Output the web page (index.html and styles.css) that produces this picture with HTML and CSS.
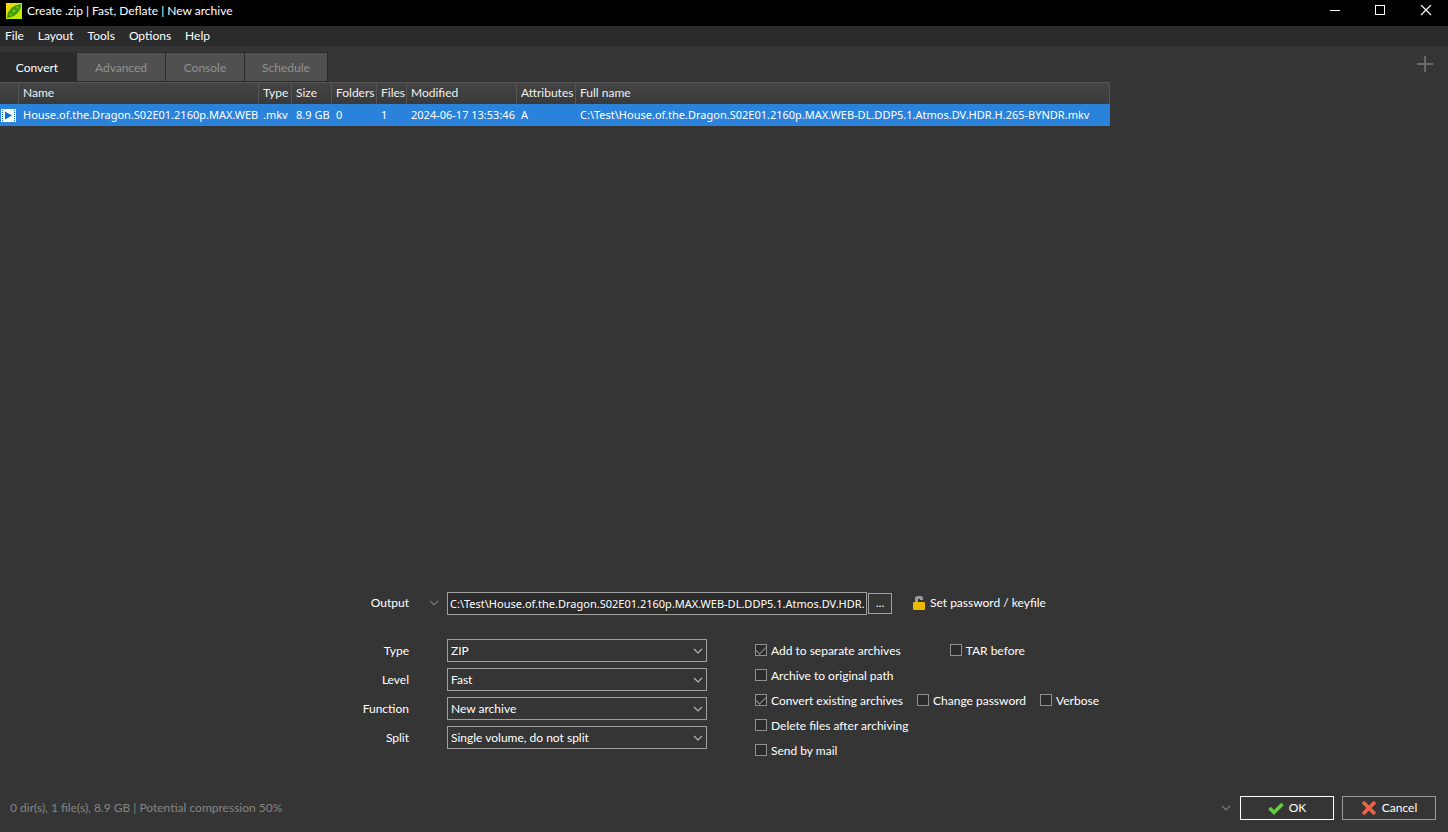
FILE: index.html
```html
<!DOCTYPE html>
<html lang="en">
<head>
<meta charset="utf-8">
<title>Create .zip | Fast, Deflate | New archive</title>
<link rel="stylesheet" href="styles.css">
</head>
<body>
<div class="window">
  <header class="titlebar">
    <svg class="app-icon" width="16" height="16" viewBox="0 0 16 16" aria-hidden="true">
      <defs><linearGradient id="leaf" x1="0" y1="0" x2="1" y2="1"><stop offset="0" stop-color="#f8d800"/><stop offset="1" stop-color="#b0f000"/></linearGradient></defs>
      <rect width="16" height="16" fill="url(#leaf)"/>
      <path d="M1 15C1 9 5 2 15 1C15 7 11 14 1 15Z" fill="#3f9d0c"/>
      <g fill="#8ccc0c" stroke="#2f8008" stroke-width=".6"><circle cx="4.600" cy="11.400" r="1.500"/><circle cx="8" cy="8" r="1.900"/><circle cx="11.400" cy="4.600" r="1.500"/></g>
    </svg>
    <h1 class="title">Create .zip | Fast, Deflate | New archive</h1>
    <div class="window-buttons">
      <button class="window-button" aria-label="Minimize"><svg width="12" height="12" viewBox="0 0 12 12"><path d="M0 5.500H10" stroke="#fff"/></svg></button>
      <button class="window-button" aria-label="Maximize"><svg width="12" height="12" viewBox="0 0 12 12"><rect x=".5" y=".5" width="9" height="9" fill="none" stroke="#fff"/></svg></button>
      <button class="window-button" aria-label="Close"><svg width="12" height="12" viewBox="0 0 12 12"><path d="M1 0L11 10M11 0L1 10" stroke="#fff" stroke-width="1.200"/></svg></button>
    </div>
  </header>

  <nav class="menubar">
    <button class="menu">File</button>
    <button class="menu">Layout</button>
    <button class="menu">Tools</button>
    <button class="menu">Options</button>
    <button class="menu">Help</button>
  </nav>

  <div class="tabbar">
    <div class="tabs" role="tablist">
      <button class="tab tab-convert tab-active" role="tab" aria-selected="true">Convert</button>
      <button class="tab tab-advanced" role="tab">Advanced</button>
      <button class="tab tab-console" role="tab">Console</button>
      <button class="tab tab-schedule" role="tab">Schedule</button>
    </div>
    <button class="add" aria-label="Add"><svg width="16" height="16" viewBox="0 0 16 16"><path d="M8 0V16M0 8H16" stroke="#696969" stroke-width="2"/></svg></button>
  </div>

  <main class="content">
    <div class="file-list">
      <table class="files">
        <colgroup><col class="c-icon"><col class="c-name"><col class="c-type"><col class="c-size"><col class="c-folders"><col class="c-files"><col class="c-modified"><col class="c-attributes"><col class="c-full"></colgroup>
        <thead>
          <tr><th></th><th>Name</th><th>Type</th><th>Size</th><th>Folders</th><th>Files</th><th>Modified</th><th>Attributes</th><th>Full name</th></tr>
        </thead>
        <tbody>
          <tr>
            <td class="icon-cell"><svg width="16" height="16" viewBox="0 0 16 16" aria-hidden="true"><rect x="1" y="2" width="15" height="13" fill="#fff"/><path d="M2.500 3V15M14.500 3V15" stroke="#1c74d0" stroke-dasharray="1 1"/><path d="M5 4.500L12 8.500L5 12.500Z" fill="#0f6fcd"/></svg></td>
            <td>House.of.the.Dragon.S02E01.2160p.MAX.WEB-DL.DDP5.1.Atmos.DV.HDR.H.265-BYNDR.mkv</td>
            <td>.mkv</td><td>8.9 GB</td><td>0</td><td>1</td><td>2024-06-17 13:53:46</td><td>A</td>
            <td>C:\Test\House.of.the.Dragon.S02E01.2160p.MAX.WEB-DL.DDP5.1.Atmos.DV.HDR.H.265-BYNDR.mkv</td>
          </tr>
        </tbody>
      </table>
    </div>

    <form class="options">
      <div class="output-row">
        <label class="label" for="output">Output</label>
        <button type="button" class="history" aria-label="Output history"><svg width="10" height="6" viewBox="0 0 10 6"><path d="M1 1L5 5L9 1" fill="none" stroke="#7a7a7a" stroke-width="1.200"/></svg></button>
        <input class="output" id="output" type="text" value="C:\Test\House.of.the.Dragon.S02E01.2160p.MAX.WEB-DL.DDP5.1.Atmos.DV.HDR.H.265-BYNDR.zip">
        <button type="button" class="browse">...</button>
        <button type="button" class="password">
          <svg width="14" height="16" viewBox="0 0 14 16" aria-hidden="true"><path d="M4.500 8V3.500Q4.500 2.500 5.500 2.500H8.500Q9.500 2.500 9.500 3.500V5" fill="none" stroke="#9c9c9c" stroke-width="3"/><rect x="1" y="7" width="12" height="8" rx="1" fill="#ecb800"/></svg>
          Set password / keyfile
        </button>
      </div>
      <div class="settings">
        <div class="selects">
          <label class="label" for="type">Type</label>
          <div class="select-box"><select id="type"><option>ZIP</option></select><svg class="chevron" width="10" height="6" viewBox="0 0 10 6"><path d="M1 1L5 5L9 1" fill="none" stroke="#b4b4b4" stroke-width="1.200"/></svg></div>
          <label class="label" for="level">Level</label>
          <div class="select-box"><select id="level"><option>Fast</option></select><svg class="chevron" width="10" height="6" viewBox="0 0 10 6"><path d="M1 1L5 5L9 1" fill="none" stroke="#b4b4b4" stroke-width="1.200"/></svg></div>
          <label class="label" for="function">Function</label>
          <div class="select-box"><select id="function"><option>New archive</option></select><svg class="chevron" width="10" height="6" viewBox="0 0 10 6"><path d="M1 1L5 5L9 1" fill="none" stroke="#b4b4b4" stroke-width="1.200"/></svg></div>
          <label class="label" for="split">Split</label>
          <div class="select-box"><select id="split"><option>Single volume, do not split</option></select><svg class="chevron" width="10" height="6" viewBox="0 0 10 6"><path d="M1 1L5 5L9 1" fill="none" stroke="#b4b4b4" stroke-width="1.200"/></svg></div>
        </div>
        <div class="checks">
          <div class="check-row check-row-tar"><label class="check"><input type="checkbox" checked>Add to separate archives</label><label class="check"><input type="checkbox">TAR before</label></div>
          <div class="check-row"><label class="check"><input type="checkbox">Archive to original path</label></div>
          <div class="check-row"><label class="check"><input type="checkbox" checked>Convert existing archives</label><label class="check"><input type="checkbox">Change password</label><label class="check"><input type="checkbox">Verbose</label></div>
          <div class="check-row"><label class="check"><input type="checkbox">Delete files after archiving</label></div>
          <div class="check-row"><label class="check"><input type="checkbox">Send by mail</label></div>
        </div>
      </div>
    </form>
  </main>

  <footer class="footer">
    <p class="status">0 dir(s), 1 file(s), 8.9 GB | Potential compression 50%</p>
    <button class="history" aria-label="More actions"><svg width="10" height="6" viewBox="0 0 10 6"><path d="M1 1L5 5L9 1" fill="none" stroke="#7a7a7a" stroke-width="1.200"/></svg></button>
    <button class="action action-default"><svg width="16" height="16" viewBox="0 0 16 16" aria-hidden="true"><path d="M1.500 8L6 12.500L14.500 4" fill="none" stroke="#5fcf40" stroke-width="3.600"/></svg>OK</button>
    <button class="action"><svg width="16" height="16" viewBox="0 0 16 16" aria-hidden="true"><path d="M2 2L14 14M14 2L2 14" stroke="#ea6248" stroke-width="3.800"/></svg>Cancel</button>
  </footer>
</div>
</body>
</html>
```
FILE: styles.css
```css
* { box-sizing: border-box; }

body {
  margin: 0;
  background: #353535;
  color: #fff;
  font: 12px/16px Lato, "Open Sans", sans-serif;
}

button, input, select {
  margin: 0;
  padding: 0;
  border: 0;
  background: none;
  color: inherit;
  font: inherit;
}

svg { display: block; flex: none; }

.window {
  display: flex;
  flex-direction: column;
  min-height: 100vh;
}

.titlebar {
  display: flex;
  align-items: center;
  height: 26px;
  padding: 0 0 5px 6px;
  background: #000;
}
.title { flex: 1; margin: 0 0 0 5px; font: inherit; }
.window-buttons { display: flex; }
.window-button { display: grid; place-items: center; width: 45px; height: 20px; }

.menubar {
  display: flex;
  gap: 14px;
  height: 20px;
  padding-left: 5px;
  background: #2b2b2b;
}

.tabbar {
  display: flex;
  justify-content: space-between;
  height: 36px;
  padding: 6px 15px 0 0;
}
.tabs { display: flex; }
.tab {
  height: 30px;
  padding-top: 2px;
  border: solid #2b2b2b;
  border-width: 1px 1px 1px 0;
  background: #505050;
  color: #929292;
}
.tab-active { border-color: #2b2b2b; background: #2b2b2b; color: #fff; }
.tab-convert { width: 77px; padding-right: 2px; }
.tab-advanced { width: 89px; }
.tab-console { width: 79px; }
.tab-schedule { width: 83px; }
.add { align-self: flex-start; padding-top: 4px; }

.content { display: flex; flex: 1; flex-direction: column; }
.file-list { flex: 1; overflow: hidden; }

.files {
  width: 1110px;
  border-collapse: separate;
  border-spacing: 0;
  table-layout: fixed;
}
.files th, .files td {
  height: 22px;
  padding: 0 0 0 4px;
  overflow: hidden;
  font-weight: 400;
  text-align: left;
  white-space: nowrap;
}
.files th {
  padding-bottom: 2px;
  border: solid #555;
  border-width: 1px 1px 0 0;
  background: linear-gradient(#444, #3a3a3a);
  color: #f0f0f0;
}
.files td { background: #2a82da; }
.files td, .output { font-family: "Noto Sans", "Open Sans", sans-serif; font-size: 11px; }
.files td:nth-child(2) { border-right: 1px solid #2a82da; }
.files .icon-cell { padding: 0; }
.c-icon { width: 19px; }
.c-name { width: 240px; }
.c-type { width: 33px; }
.c-size { width: 40px; }
.c-folders { width: 45px; }
.c-files { width: 30px; }
.c-modified { width: 110px; }
.c-attributes { width: 59px; }

.options { width: 748px; margin: 0 auto; }
.output-row { display: flex; align-items: center; height: 24px; margin-bottom: 24px; }
.label { width: 60px; padding-right: 1px; text-align: right; }
.history { display: grid; place-items: center; width: 10px; height: 20px; }
.output-row .history { margin: 0 8px 0 19px; }
.output {
  width: 420px;
  height: 23px;
  padding: 0 2px;
  border: 1px solid #a0a0a0;
  background: #2b2b2b;
}
.browse { width: 24px; height: 21px; margin-left: 1px; border: 1px solid #a0a0a0; }
.password { display: flex; align-items: center; gap: 4px; margin-left: 20px; }

.settings { display: flex; gap: 48px; }
.selects {
  display: grid;
  grid-template-columns: 60px 260px;
  gap: 6px 37px;
  align-content: start;
  align-items: center;
}
.select-box { position: relative; }
.select-box select {
  display: block;
  width: 100%;
  height: 23px;
  padding: 0 20px 0 3px;
  border: 1px solid #a0a0a0;
  border-radius: 0;
  appearance: none;
}
.chevron { position: absolute; top: 9px; right: 4px; pointer-events: none; }

.checks { display: flex; flex: 1; flex-direction: column; gap: 1px; }
.check-row { display: flex; gap: 14px; height: 24px; }
.check-row-tar { gap: 49px; }
.check { display: flex; align-items: center; gap: 4px; white-space: nowrap; }
.check input {
  display: grid;
  place-items: start center;
  width: 12px;
  height: 12px;
  margin-bottom: 2px;
  border: 1px solid #919191;
  background: #2b2b2b;
  appearance: none;
}
.check input:checked::after {
  content: "";
  width: 9px;
  height: 5px;
  border: solid #919191;
  border-width: 0 0 1px 1px;
  transform: translateY(1px) rotate(-45deg);
}

.footer {
  display: flex;
  align-items: center;
  margin-top: 33px;
  padding: 0 12px 12px 10px;
}
.status { flex: 1; margin: 0; color: #858585; }
.action {
  display: flex;
  align-items: center;
  justify-content: center;
  gap: 5px;
  width: 94px;
  height: 24px;
  margin-left: 8px;
  border: 1px solid #999;
}
.action-default { margin-left: 9px; border-color: #fff; }
```
